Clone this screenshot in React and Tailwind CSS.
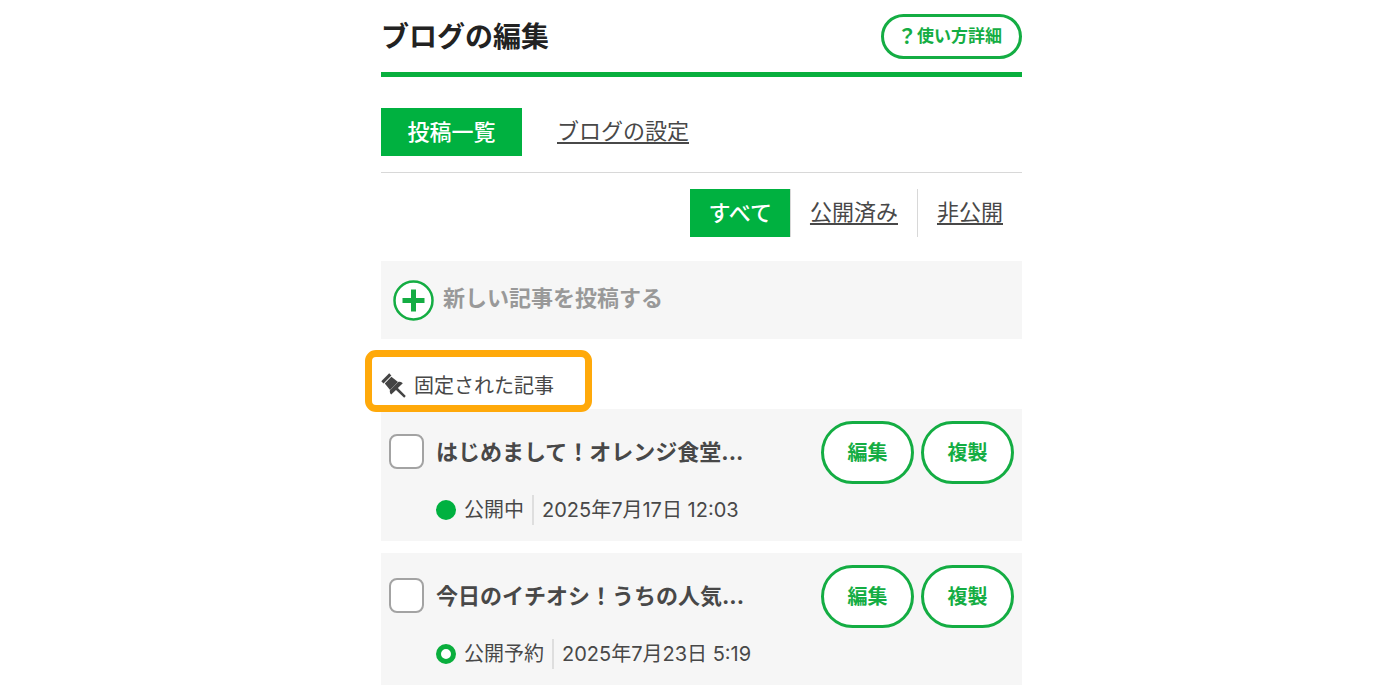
import { useState } from 'react'

const filters = [
  { id: 'all', label: 'すべて' },
  { id: 'public', label: '公開済み' },
  { id: 'private', label: '非公開' },
]

const posts = [
  { id: 1, title: 'はじめまして！オレンジ食堂...', status: '公開中', date: '2025年7月17日 12:03', published: true },
  { id: 2, title: '今日のイチオシ！うちの人気...', status: '公開予約', date: '2025年7月23日 5:19', published: false },
]

function App() {
  const [filter, setFilter] = useState('all')

  return (
    <div className="min-h-screen bg-white text-[#484848] font-['Inter','Noto_Sans_CJK_JP',sans-serif]">
      <div className="mx-auto max-w-[644px] pl-[3px]">
        <Header />
        <Tabs />
        <FilterBar filter={filter} setFilter={setFilter} />

        <main>
          <button className="mt-6 flex h-[78px] w-full items-center gap-[9px] bg-[#f6f6f6] pl-3 text-[22px] font-bold text-[#999]">
            <PlusIcon />
            <span className="pb-1">新しい記事を投稿する</span>
          </button>

          <section>
            <div className="relative flex h-[70px] items-center gap-2 pt-[23px]">
              <PinIcon />
              <h2 className="text-[20px] leading-[30px]">固定された記事</h2>
              <div className="pointer-events-none absolute -left-4 top-[11px] h-[62px] w-[227px] rounded-[11px] border-[7px] border-[#ffa90a]"></div>
            </div>

            <ul className="space-y-3">
              {posts.map((post) => (
                <PostCard key={post.id} post={post} />
              ))}
            </ul>
          </section>
        </main>
      </div>
    </div>
  )
}

function Header() {
  return (
    <header className="flex items-center justify-between border-b-[5px] border-[#08af3d] pt-[14px] pb-[13px]">
      <h1 className="pt-0.5 text-[28px] leading-[43px] font-bold text-[#222]">ブログの編集</h1>
      <button className="flex h-[45px] w-[141px] items-center justify-center rounded-full border-[3px] border-[#14ad43] pr-1 text-[17px] font-bold text-[#14ad43]">
        <span className="text-[20px]">？</span>
        <span>使い方詳細</span>
      </button>
    </header>
  )
}

function Tabs() {
  return (
    <nav className="mt-[31px] flex items-center gap-[35px] border-b border-[#d8d8d8] pb-4 text-[22px]">
      <a href="#posts" className="flex h-12 w-[141px] items-center justify-center bg-[#00b140] font-medium text-white">
        投稿一覧
      </a>
      <a href="#settings" className="pb-0.5 underline decoration-2 underline-offset-3">
        ブログの設定
      </a>
    </nav>
  )
}

function FilterBar({ filter, setFilter }) {
  return (
    <div className="mt-4 flex justify-end divide-x divide-[#d8d8d8] text-[22px]">
      {filters.map((item) => (
        <button
          key={item.id}
          onClick={() => setFilter(item.id)}
          className={`h-12 ${
            filter === item.id
              ? 'bg-[#00b140] px-[18px] font-medium text-white'
              : 'px-[19px] pb-0.5 underline decoration-2 underline-offset-3'
          }`}
        >
          {item.label}
        </button>
      ))}
    </div>
  )
}

function PostCard({ post }) {
  return (
    <li className="h-[132px] bg-[#f6f6f6] px-2 pt-3">
      <div className="flex h-[63px] items-center">
        <input
          id={`post-${post.id}`}
          type="checkbox"
          className="mb-[3px] h-[35px] w-[35px] appearance-none rounded-lg border-2 border-[#a3a3a3] bg-white checked:bg-[#00b140]"
        />
        <label htmlFor={`post-${post.id}`} className="ml-3 flex-1 text-[22px] font-bold">
          {post.title}
        </label>
        <div className="flex gap-[7px]">
          <ActionButton>編集</ActionButton>
          <ActionButton>複製</ActionButton>
        </div>
      </div>

      <div className="mt-[11px] ml-[47px] flex h-[30px] items-center text-[20px]">
        <span
          className={`h-5 w-5 rounded-full ${
            post.published ? 'bg-[#00b140]' : 'border-[5px] border-[#0aae3d] bg-white'
          }`}
        ></span>
        <span className="ml-2">{post.status}</span>
        <span className="ml-2 border-l-2 border-[#dedede] pl-2">{post.date}</span>
      </div>
    </li>
  )
}

function ActionButton({ children }) {
  return (
    <button className="h-[63px] w-[93px] rounded-full border-[3px] border-[#14ad43] bg-white text-[20px] font-bold text-[#14ad43]">
      {children}
    </button>
  )
}

function PlusIcon() {
  return (
    <svg width="41" height="41" viewBox="0 0 41 41" fill="none" aria-hidden="true">
      <circle cx="20.5" cy="20.5" r="19" fill="#fff" stroke="#14ad43" strokeWidth="2.5" />
      <path d="M20.5 9.5v22M9.5 20.5h22" stroke="#14ad43" strokeWidth="5" />
    </svg>
  )
}

function PinIcon() {
  return (
    <svg width="25" height="25" viewBox="0 0 25 25" fill="#444" aria-hidden="true">
      <path d="M8.2 .3 10.4 2.5 2.5 10.4 .3 8.2Z" />
      <path d="M10.4 3.8 17 9.1 9.1 17 3.8 10.4Z" />
      <path d="M17.5 8.8C19.2 8.8 20.6 9.2 21.8 10.2L16.9 15 24.8 23 23.2 24.7 15 16.9 10.2 21.6C9 20.4 8.7 19 8.8 17.5Z" />
    </svg>
  )
}

export default App
